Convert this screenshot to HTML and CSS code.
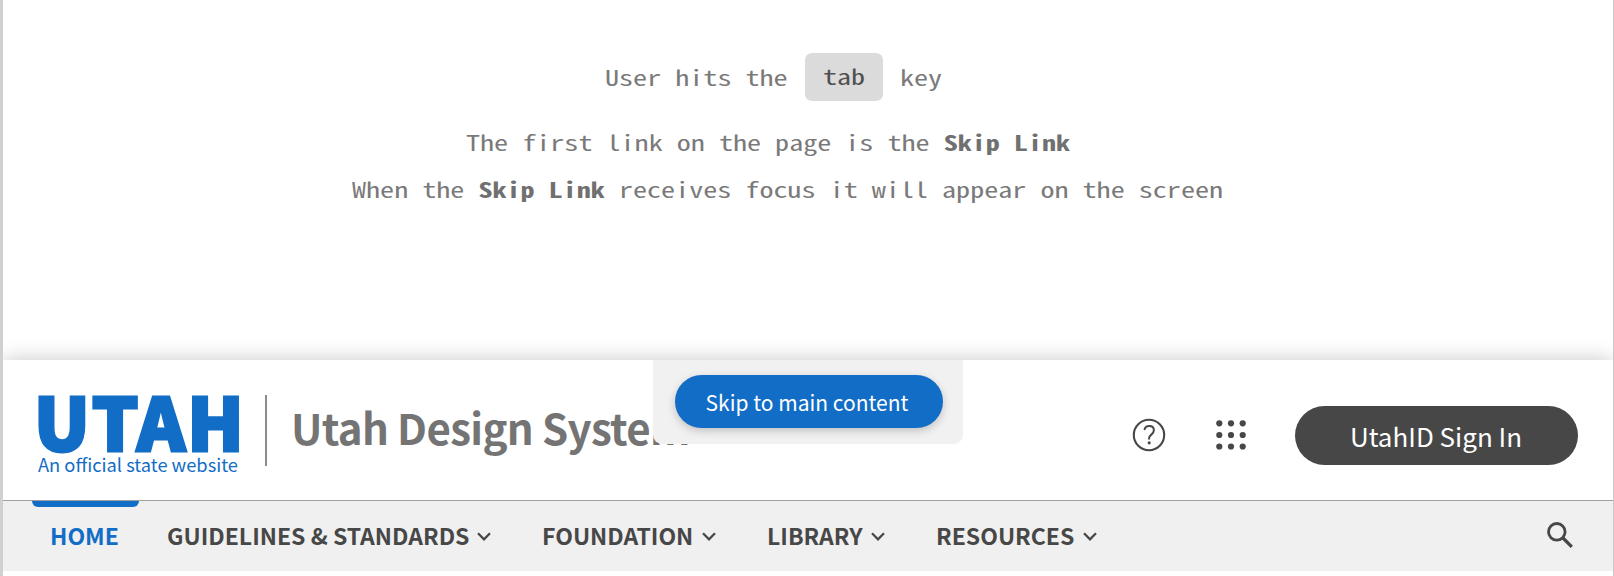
FILE: index.html
```html
<!DOCTYPE html>
<html lang="en">
<head>
<meta charset="utf-8">
<title>Utah Design System</title>
<link rel="stylesheet" href="styles.css">
</head>
<body>
<div class="frame">
  <section class="notes">
    <p class="note-key"><span class="mono before">User hits the</span><kbd class="key"><span class="mono">tab</span></kbd><span class="mono">key</span></p>
    <p class="note-first"><span class="mono">The first link on the page is the <b>Skip Link</b></span></p>
    <p class="note-focus"><span class="mono">When the <b>Skip Link</b> receives focus it will appear on the screen</span></p>
  </section>
  <header class="header">
    <div class="logo">
      <span class="logo-name">UTAH</span>
      <span class="logo-tag">An official state website</span>
    </div>
    <div class="divider"></div>
    <h1 class="title">Utah Design System</h1>
    <div class="actions">
      <svg class="help" viewBox="0 0 34 34" fill="none" stroke="#474747" stroke-linecap="round">
        <circle cx="17" cy="17" r="15.2" stroke-width="2.1"/>
        <path d="M12.6 11.2C13.2 9.1 14.9 8.1 17.2 8.1c2.8 0 4.7 1.7 4.7 4.2 0 2-1.1 3.1-2.6 4.3-1.6 1.3-2.3 2.1-2.3 4.1" stroke-width="2"/>
        <circle cx="17.2" cy="24.8" r="1.6" fill="#474747" stroke="none"/>
      </svg>
      <svg class="apps" viewBox="0 0 30 30" fill="#474747">
        <circle cx="3.3" cy="3.3" r="3.1"/><circle cx="15" cy="3.3" r="3.1"/><circle cx="26.7" cy="3.3" r="3.1"/>
        <circle cx="3.3" cy="15" r="3.1"/><circle cx="15" cy="15" r="3.1"/><circle cx="26.7" cy="15" r="3.1"/>
        <circle cx="3.3" cy="26.5" r="3.1"/><circle cx="15" cy="26.5" r="3.1"/><circle cx="26.7" cy="26.5" r="3.1"/>
      </svg>
      <button class="sign-in">UtahID Sign In</button>
    </div>
    <div class="skip"><a class="skip-link" href="#main">Skip to main content</a></div>
  </header>
  <nav class="nav">
    <a class="item home">HOME</a>
    <a class="item guidelines"><span>GUIDELINES &amp; STANDARDS</span><svg class="chevron" viewBox="0 0 14 9"><path d="M1 1.3l6 6 6-6"/></svg></a>
    <a class="item foundation"><span>FOUNDATION</span><svg class="chevron" viewBox="0 0 14 9"><path d="M1 1.3l6 6 6-6"/></svg></a>
    <a class="item library"><span>LIBRARY</span><svg class="chevron" viewBox="0 0 14 9"><path d="M1 1.3l6 6 6-6"/></svg></a>
    <a class="item resources"><span>RESOURCES</span><svg class="chevron" viewBox="0 0 14 9"><path d="M1 1.3l6 6 6-6"/></svg></a>
    <svg class="search" viewBox="0 0 26 26" fill="none" stroke="#474747"><circle cx="9.8" cy="9.8" r="8.3" stroke-width="2.8"/><path d="M16 16l8.8 8.8" stroke-width="3.3"/></svg>
  </nav>
</div>
</body>
</html>
```
FILE: styles.css
```css
* { box-sizing: border-box; }
body { margin: 0; background: #fff; font-family: "Noto Sans CJK SC", "Noto Sans", sans-serif; color: #474747; }
.frame { width: 1614px; height: 576px; border-left: 3px solid #d0d0d0; border-right: 1px solid #c8c8c8; background: #fff; overflow: hidden; }
.notes { height: 360px; padding-top: 53px; color: #7a7a7a; font-size: 21px; line-height: 48px; }
.notes p { display: flex; margin: 0; white-space: pre; }
/* The mono face is half an em wide; widen it to a 14px cell. */
.mono { display: inline-block; font-family: "Noto Sans Mono CJK SC", "DejaVu Sans Mono", monospace; transform: scaleX(1.338); transform-origin: 0 50%; }
.mono b { font-weight: 700; color: #707070; }
.notes .note-key { padding-left: 602px; }
.before { width: 182px; }
.key { width: 78px; height: 48px; margin: 0 17px 0 18px; padding-left: 18px; border-radius: 7px; background: #dbdbdb; color: #505050; font: inherit; line-height: 46px; }
.notes .note-first { padding-left: 463px; margin-top: 17px; }
.notes .note-focus { padding-left: 349px; margin-top: -1px; }
.header { position: relative; display: flex; align-items: flex-start; height: 140px; padding: 35px 35px 0 34px; background: #fff; box-shadow: 0 0 20px rgba(0,0,0,.22); }
.logo { display: flex; flex-direction: column; width: 202px; color: #126dc6; white-space: nowrap; }
.logo-name { margin: -4px 0 0 -3px; font-size: 73px; font-weight: 900; line-height: 57px; letter-spacing: 2px; -webkit-text-stroke: 3px #126dc6; }
.logo-tag { margin: 3px 0 0 1px; font-size: 18.3px; line-height: 26px; }
.divider { width: 1.5px; height: 71px; margin-left: 26px; background: #8c8c8c; }
.title { width: 420px; margin: 9px 0 0 24.5px; font-size: 42px; font-weight: 700; line-height: 46px; letter-spacing: -0.66px; color: #747474; white-space: nowrap; }
.actions { display: flex; align-items: center; height: 60px; margin: 10px 0 0 auto; }
.help { width: 34px; height: 34px; }
.apps { width: 30px; height: 30px; margin: 0 49px 0 50px; }
.sign-in { width: 283px; height: 59px; padding: 0 1px 0 0; border: 0; border-radius: 30px; background: #474747; color: #fff; font: 26px/59px "Noto Sans CJK SC", sans-serif; }
.skip { position: absolute; left: 650px; top: 0; width: 310px; height: 84px; padding: 14.5px 20px 0 22px; border-radius: 0 0 9px 9px; background: #f1f1f1; }
.skip-link { display: block; height: 53px; padding-right: 4px; border-radius: 27px; background: #126dc6; color: #fff; box-shadow: 0 3px 8px rgba(0,0,0,.2); font-size: 21px; line-height: 54px; text-align: center; text-decoration: none; }
.nav { position: relative; display: flex; align-items: flex-start; height: 71px; background: #f0f0f0; border-top: 1.5px solid #a0a0a0; padding: 0 40px 0 29px; }
.item { display: flex; align-items: center; height: 67px; font-size: 23px; font-weight: 700; white-space: nowrap; }
.item span { width: 100%; }
.home { position: relative; width: 107px; padding-left: 18px; color: #126dc6; }
.home::before { content: ""; position: absolute; left: 0; top: 0; width: 107px; height: 6px; border-radius: 0 0 6px 6px; background: #126dc6; }
.chevron { flex: none; width: 14px; height: 9px; margin-top: 3px; fill: none; stroke: #474747; stroke-width: 2.3; }
.guidelines { width: 324px; margin-left: 28px; }
.foundation { width: 174px; margin-left: 51px; }
.library { width: 118px; margin-left: 51px; }
.resources { width: 161px; margin-left: 51px; }
.search { width: 26px; height: 26px; margin: 21px 0 0 auto; }
```
